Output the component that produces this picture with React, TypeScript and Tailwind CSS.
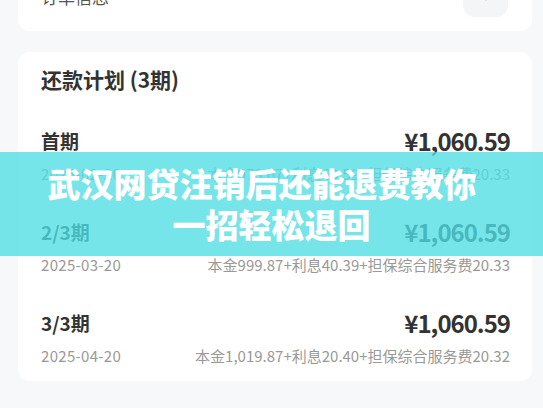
import { ChevronDown } from "lucide-react";

const plan = [
  {
    label: "首期",
    date: "2025-02-20",
    amount: "¥1,060.59",
    detail: "本金979.67+利息60.59+担保综合服务费20.33",
  },
  {
    label: "2/3期",
    date: "2025-03-20",
    amount: "¥1,060.59",
    detail: "本金999.87+利息40.39+担保综合服务费20.33",
  },
  {
    label: "3/3期",
    date: "2025-04-20",
    amount: "¥1,060.59",
    detail: "本金1,019.87+利息20.40+担保综合服务费20.32",
  },
];

const App = () => {
  return (
    <div
      className="relative h-[408px] w-[543px] overflow-hidden bg-[#f7f8fa]"
      style={{ fontFamily: '"Noto Sans CJK SC", "Noto Sans", sans-serif' }}
    >
      {/* 订单信息 card, mostly scrolled off */}
      <div className="-mt-[38px] ml-[18px] mr-[11px] flex h-[69px] items-center justify-between rounded-b-xl bg-white pl-[23px] pr-[24px]">
        <span className="text-[17px] text-[#555]">订单信息</span>
        <div className="flex h-[40px] w-[45px] items-center justify-center rounded-xl bg-[#f4f5f6]">
          <ChevronDown className="h-5 w-5 text-[#888]" strokeWidth={2} />
        </div>
      </div>

      {/* 还款计划 */}
      <div className="ml-[18px] mr-[11px] mt-[21px] rounded-xl bg-white pb-[15px] pl-[23px] pr-[22px] pt-[14px]">
        <h2 className="text-[21px] font-bold leading-[26px] text-[#333]">还款计划 (3期)</h2>

        <div className="mt-[34px] flex flex-col gap-[33px]">
          {plan.map((p) => (
            <div key={p.label}>
              <div className="flex h-[30px] items-center justify-between">
                <span className="text-[19px] font-bold text-[#333]">{p.label}</span>
                <span className="text-[24px] font-bold tracking-[-1px] text-[#333]">{p.amount}</span>
              </div>
              <div className="mt-[8px] flex h-[20px] items-center justify-between text-[15px] text-[#999]">
                <span className="tracking-[0.3px]">{p.date}</span>
                <span>{p.detail}</span>
              </div>
            </div>
          ))}
        </div>
      </div>

      {/* 标题横幅 */}
      <div className="absolute left-0 right-0 top-[152px] flex h-[104px] flex-col items-center justify-center bg-[rgba(80,222,228,0.78)]">
        <p className="pr-[19px] text-[33px] font-black leading-[41px] text-white">武汉网贷注销后还能退费教你</p>
        <p className="text-[33px] font-black leading-[41px] text-white">一招轻松退回</p>
      </div>
    </div>
  );
};

export default App;
